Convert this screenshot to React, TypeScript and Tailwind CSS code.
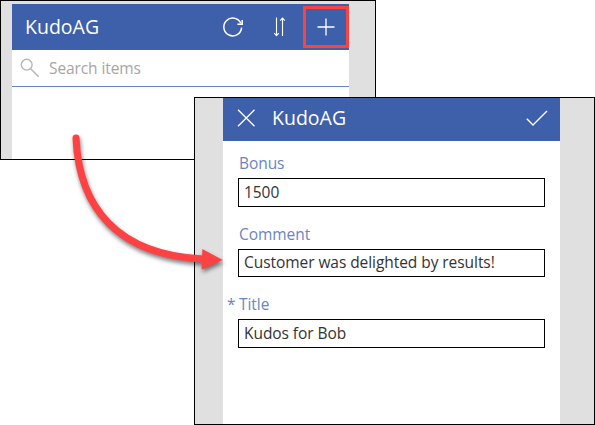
import React from "react";

function IconRefresh() {
  return (
    <svg className="block" width="22" height="22" viewBox="0 0 22 22" fill="none" stroke="white" strokeWidth="1.5">
      <path d="M18.8 7.2 A8.9 8.9 0 1 0 19.6 11.6" />
      <path d="M20.2 4 V8.2 H15.4" />
    </svg>
  );
}

function IconSort() {
  return (
    <svg className="block" width="14" height="22" viewBox="0 0 14 22" fill="none" stroke="white" strokeWidth="1.1">
      <path d="M4.5 1.5 V19.5 M2.2 17.2 L4.5 19.7 L6.8 17.2" />
      <path d="M10.5 20 V2.5 M8.2 4.6 L10.5 2.1 L12.8 4.6" />
    </svg>
  );
}

function Field({ label, value, required, box }: { label: string; value: string; required?: boolean; box: string }) {
  return (
    <label className="block">
      <span className="flex h-[22px] items-center text-[15.5px] leading-[22px] tracking-[-0.06px] text-[#6b85c1]">
        <span className="w-3 shrink-0">{required ? "*" : ""}</span>
        <span>{label}</span>
      </span>
      <span className={"ml-[11px] flex w-[307px] items-center border border-black pl-[5px] text-[15.5px] tracking-[-0.06px] text-[#333333] " + box}>
        {value}
      </span>
    </label>
  );
}

export default function App() {
  return (
    <main className="relative h-[425px] w-[595px] overflow-hidden bg-white font-['Open_Sans',sans-serif]">
      <section className="flex h-[160px] w-[376px] border border-black bg-[#e0e0e0] pl-[11px] pt-[3px]">
        <div className="w-[337px] bg-white">
          <header className="flex h-[46px] items-center bg-[#3e60aa] pl-[13px] text-white">
            <h1 className="w-[197px] text-[19.5px] leading-6">KudoAG</h1>
            <IconRefresh />
            <span className="ml-[28px]"><IconSort /></span>
            <span className="ml-auto flex h-[42px] w-[46px] items-center justify-center border-[3px] border-[#fe4143]">
              <svg className="block" width="18" height="18" viewBox="0 0 18 18" stroke="white" strokeWidth="1.3">
                <path d="M9 .5V17.5M.5 9H17.5" />
              </svg>
            </span>
          </header>
          <div className="flex h-[37px] items-center border-b border-[#6485c6] pl-[8px]">
            <svg className="block" width="20" height="20" viewBox="0 0 20 20" fill="none" stroke="#b5b5b5" strokeWidth="1.4">
              <circle cx="6.7" cy="6.7" r="5.4" />
              <path d="M10.7 10.7 L18.7 18.7" />
            </svg>
            <span className="ml-[9px] text-[15.5px] leading-5 tracking-[-0.1px] text-[#a6a6a6]">Search items</span>
          </div>
        </div>
      </section>

      <section className="absolute left-[194px] top-[97px] flex h-[328px] w-[401px] border border-black bg-[#e0e0e0] pl-[28px]">
        <div className="w-[337px] bg-white">
          <header className="flex h-[43px] items-center bg-[#3e60aa] pb-[3px] pl-[13px] pr-[12px] text-white">
            <svg className="block" width="20" height="20" viewBox="0 0 20 20" stroke="white" strokeWidth="1.3">
              <path d="M2 1.7L18.5 18.2M18.5 1.7L2 18.2" />
            </svg>
            <h2 className="ml-[16px] text-[19.5px] leading-6">KudoAG</h2>
            <svg className="ml-auto block" width="22" height="18" viewBox="0 0 22 18" fill="none" stroke="white" strokeWidth="1.4">
              <path d="M.8 9.8L7 16L21 2" />
            </svg>
          </header>
          <div className="flex flex-col pl-1 pt-[11px]">
            <Field label="Bonus" value="1500" box="mt-[4px] h-[29px]" />
            <div className="mt-[16px]">
              <Field label="Comment" value="Customer was delighted by results!" box="mt-[4px] h-[28px]" />
            </div>
            <div className="mt-[16px]">
              <Field label="Title" value="Kudos for Bob" required box="mt-[4px] h-[29px]" />
            </div>
          </div>
        </div>
      </section>

      <svg className="pointer-events-none absolute left-0 top-0 drop-shadow-[1px_3px_2px_rgba(0,0,0,0.5)]" width="595" height="425" viewBox="0 0 595 425" fill="none">
        <path d="M76 138 C79 208 118 255 203 259" stroke="#fe4143" strokeWidth="7" strokeLinecap="round" />
        <path d="M202.3 249L222.7 260L201.7 269.5Z" fill="#fe4143" />
      </svg>
    </main>
  );
}
